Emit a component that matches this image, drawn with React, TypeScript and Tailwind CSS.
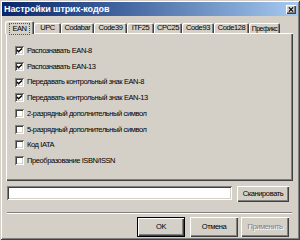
const tabs = [
  { label: "EAN", w: 29 },
  { label: "UPC", w: 27 },
  { label: "Codabar", w: 33 },
  { label: "Code39", w: 33 },
  { label: "ITF25", w: 27 },
  { label: "CPC25", w: 28 },
  { label: "Code93", w: 32 },
  { label: "Code128", w: 35 },
  { label: "Префикс", w: 31 },
];

const options = [
  { text: "Распознавать EAN-8", on: true },
  { text: "Распознавать EAN-13", on: true },
  { text: "Передавать контрольный знак EAN-8", on: true },
  { text: "Передавать контрольный знак EAN-13", on: true },
  { text: "2-разрядный дополнительный символ", on: false },
  { text: "5-разрядный дополнительный символ", on: false },
  { text: "Код IATA", on: false },
  { text: "Преобразование ISBN/ISSN", on: false },
];

const raised =
  "shadow-[inset_1px_1px_#ffffff,inset_-1px_-1px_#404040,inset_-2px_-2px_#808080]";

function Check({ on }: { on: boolean }) {
  return (
    <span className="relative w-[9px] h-[9px] bg-white shrink-0 shadow-[inset_1px_1px_#808080,inset_-1px_-1px_#ffffff,inset_2px_2px_#404040,inset_-2px_-2px_#d4d0c8]">
      {on && (
        <svg viewBox="0 0 9 9" className="absolute inset-0 w-[9px] h-[9px]">
          <path d="M2 4 L3.6 5.8 L7 2.4" fill="none" stroke="#000" strokeWidth="1.4" />
        </svg>
      )}
    </span>
  );
}

function Button({
  label,
  w,
  h,
  def,
  disabled,
}: {
  label: string;
  w: number;
  h: number;
  def?: boolean;
  disabled?: boolean;
}) {
  return (
    <div
      className={`flex items-center justify-center bg-[#d4d0c8] ${
        def
          ? "shadow-[inset_0_0_0_1px_#000,inset_2px_2px_#ffffff,inset_-2px_-2px_#404040,inset_-3px_-3px_#808080]"
          : raised
      } ${disabled ? "text-[#808080] [text-shadow:1px_1px_#ffffff]" : "text-black"}`}
      style={{ width: w, height: h }}
    >
      {label}
    </div>
  );
}

export default function App() {
  return (
    <div className="w-[300px] h-[240px] bg-[#d4d0c8] p-[2px] flex flex-col font-['Liberation_Sans',Arial,sans-serif] text-[7.5px] tracking-[-0.4px] leading-none text-black shadow-[inset_1px_1px_#d4d0c8,inset_-1px_-1px_#404040,inset_2px_2px_#ffffff,inset_-2px_-2px_#808080]">
      {/* title bar */}
      <div className="h-[14px] flex items-center justify-between bg-gradient-to-r from-[#0a246a] to-[#a6caf0] pl-[2px] pr-[2px]">
        <span className="text-white font-bold text-[9px] tracking-[-0.1px]">Настройки штрих-кодов</span>
        <div className={`w-[10px] h-[9px] bg-[#d4d0c8] flex items-center justify-center ${raised}`}>
          <svg viewBox="0 0 8 7" className="w-[6px] h-[5px]">
            <path d="M1 0.5 L7 6.5 M7 0.5 L1 6.5" stroke="#000" strokeWidth="1.5" />
          </svg>
        </div>
      </div>

      {/* tabs */}
      <div className="mt-[5px] ml-[5px] h-[12px] flex items-end relative z-10">
        {tabs.map((t, i) =>
          i === 0 ? (
            <div
              key={t.label}
              className="h-[13px] -mb-[1px] -ml-[2px] bg-[#d4d0c8] rounded-t-[2px] flex items-start justify-center pt-[2px] shadow-[inset_1px_1px_#ffffff,inset_-1px_0_#404040,inset_-2px_0_#808080]"
              style={{ width: t.w }}
            >
              <span className="border border-dotted border-[#555] px-[2px] pt-[1px] pb-[1px]">{t.label}</span>
            </div>
          ) : (
            <div
              key={t.label}
              className="h-[10px] bg-[#d4d0c8] rounded-t-[2px] flex items-center justify-center overflow-hidden whitespace-nowrap shadow-[inset_1px_1px_#ffffff,inset_-1px_0_#404040,inset_-2px_0_#808080]"
              style={{ width: t.w }}
            >
              <span className={t.label === "Префикс" ? "text-[7px] tracking-[-0.5px]" : ""}>{t.label}</span>
            </div>
          )
        )}
      </div>

      {/* panel */}
      <div className={`ml-[4px] w-[287px] h-[148px] pt-[10px] pl-[9px] flex flex-col ${raised}`}>
        {options.map((o) => (
          <div key={o.text} className="h-[15.7px] flex items-center gap-[3px]">
            <Check on={o.on} />
            <span>{o.text}</span>
          </div>
        ))}
      </div>

      {/* scan row */}
      <div className="mt-[5px] ml-[5px] flex items-start gap-[5px]">
        <div className="w-[225px] h-[14px] bg-white shadow-[inset_1px_1px_#808080,inset_-1px_-1px_#ffffff,inset_2px_2px_#404040,inset_-2px_-2px_#d4d0c8]" />
        <Button label="Сканировать" w={52} h={16} />
      </div>

      {/* separator */}
      <div className="mt-[10px] ml-[5px] w-[285px] h-[2px] border-t border-[#808080] border-b border-b-white" />

      {/* buttons */}
      <div className="mt-[3px] ml-[135px] flex">
        <Button label="OK" w={48} h={20} def />
        <div className="w-[5px]" />
        <Button label="Отмена" w={48} h={20} />
        <div className="w-[3px]" />
        <Button label="Применить" w={48} h={20} disabled />
      </div>
    </div>
  );
}
